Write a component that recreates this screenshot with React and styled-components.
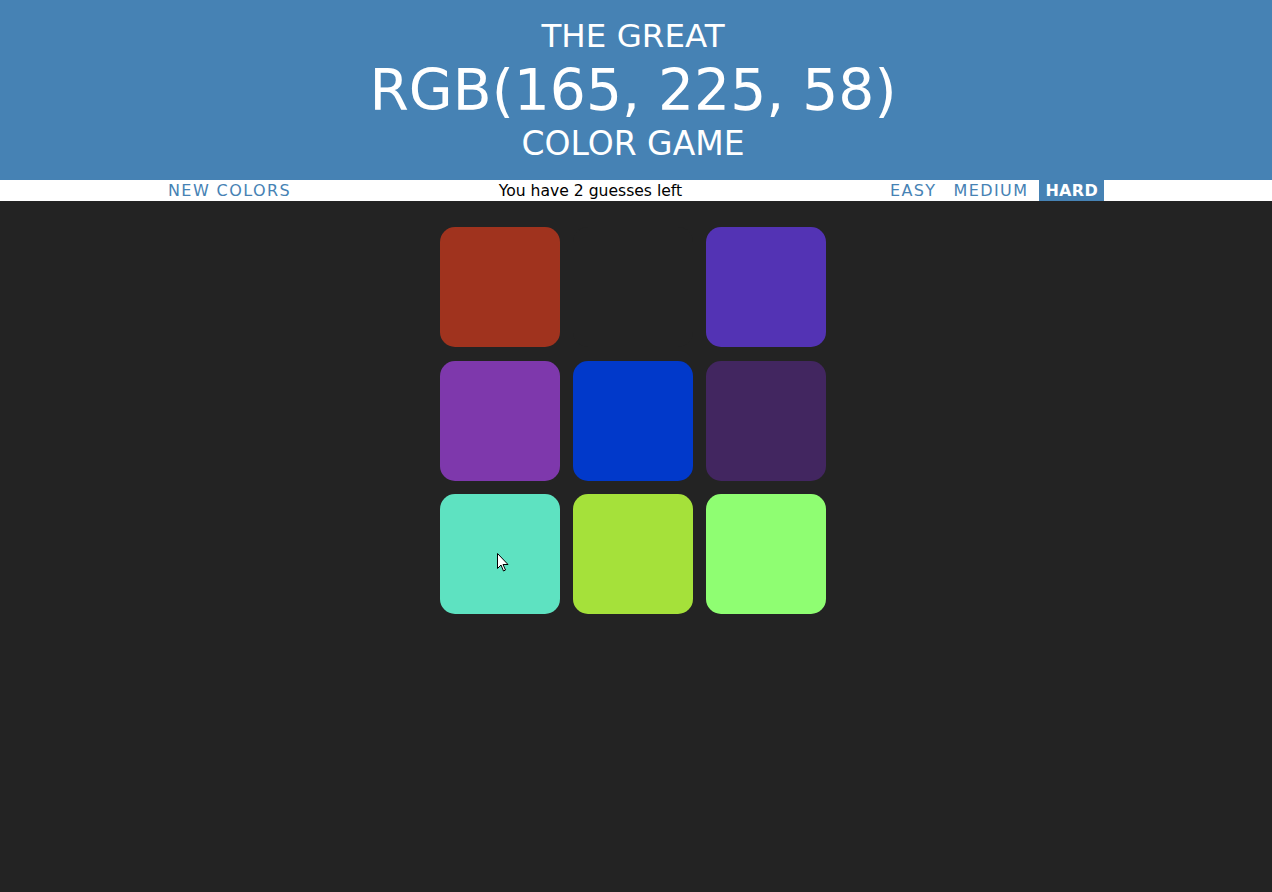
import styled, { createGlobalStyle } from "styled-components"

const GlobalStyle = createGlobalStyle`
    html, body {
        margin: 0;
        padding: 0;
        background: #232323;
        font-family: "DejaVu Sans", "Open Sans", sans-serif;
    }
`

const Header = styled.header`
    background: steelblue;
    color: #fff;
    height: 180px;
    display: flex;
    flex-direction: column;
    align-items: center;
    text-transform: uppercase;
    font-weight: 400;
    padding-top: 18px;
    padding-right: 6px;
    box-sizing: border-box;
`

const HeaderLine = styled.div`
    font-size: ${(p) => p.$size}px;
    line-height: ${(p) => p.$lh}px;
    white-space: nowrap;
`

const Stripe = styled.nav`
    background: #fff;
    height: 21px;
`

const StripeInner = styled.div`
    width: 942px;
    height: 100%;
    margin-left: calc(50% - 474px);
    display: flex;
    justify-content: space-between;
    align-items: center;
`

const NavButton = styled.button`
    border: none;
    height: 21px;
    padding: 0 6px;
    background: ${(p) => (p.$selected ? "steelblue" : "transparent")};
    color: ${(p) => (p.$selected ? "#fff" : "steelblue")};
    font-family: inherit;
    font-size: 16px;
    font-weight: ${(p) => (p.$selected ? 700 : 400)};
    letter-spacing: ${(p) => (p.$selected ? "0.3px" : "1.4px")};
    text-transform: uppercase;
    cursor: pointer;
`

const Message = styled.span`
    font-size: 15.6px;
    color: #000;
`

const ModeGroup = styled.div`
    display: flex;
    gap: 5px;
    height: 100%;
`

const Board = styled.div`
    width: 386px;
    margin: 26px 0 0 calc(50% - 196px);
    display: grid;
    grid-template-columns: repeat(3, 120px);
    grid-auto-rows: 120px;
    column-gap: 13px;
    row-gap: 13.5px;
`

const Square = styled.div`
    position: relative;
    border-radius: 15px;
    background: ${(p) => p.$color};
`

const Pointer = styled.svg`
    position: absolute;
    left: 57px;
    top: 59px;
`

const colors = [
    "rgb(160, 51, 30)",
    "#232323",
    "rgb(83, 51, 180)",
    "rgb(126, 56, 172)",
    "rgb(1, 57, 202)",
    "rgb(66, 38, 96)",
    "rgb(94, 226, 193)",
    "rgb(165, 225, 58)",
    "rgb(143, 254, 114)",
]

export default function App() {
    return (
        <>
            <GlobalStyle />
            <Header>
                <HeaderLine $size={32.5} $lh={37}>The Great</HeaderLine>
                <HeaderLine $size={56.7} $lh={70}>RGB(165, 225, 58)</HeaderLine>
                <HeaderLine $size={33} $lh={38}>Color Game</HeaderLine>
            </Header>
            <Stripe>
                <StripeInner>
                    <NavButton>New Colors</NavButton>
                    <Message>You have 2 guesses left</Message>
                    <ModeGroup>
                        <NavButton>Easy</NavButton>
                        <NavButton>Medium</NavButton>
                        <NavButton $selected>Hard</NavButton>
                    </ModeGroup>
                </StripeInner>
            </Stripe>
            <Board>
                {colors.map((c, i) => (
                    <Square key={i} $color={c}>
                        {i === 6 && (
                            <Pointer width="12" height="19" viewBox="0 0 12 19">
                                <path
                                    d="M0.5 0.5 L0.5 15.5 L4 12 L6.5 18 L8.5 17 L6 11.5 L11 11.5 Z"
                                    fill="#fff"
                                    stroke="#000"
                                    strokeWidth="1"
                                    strokeLinejoin="round"
                                />
                            </Pointer>
                        )}
                    </Square>
                ))}
            </Board>
        </>
    )
}
